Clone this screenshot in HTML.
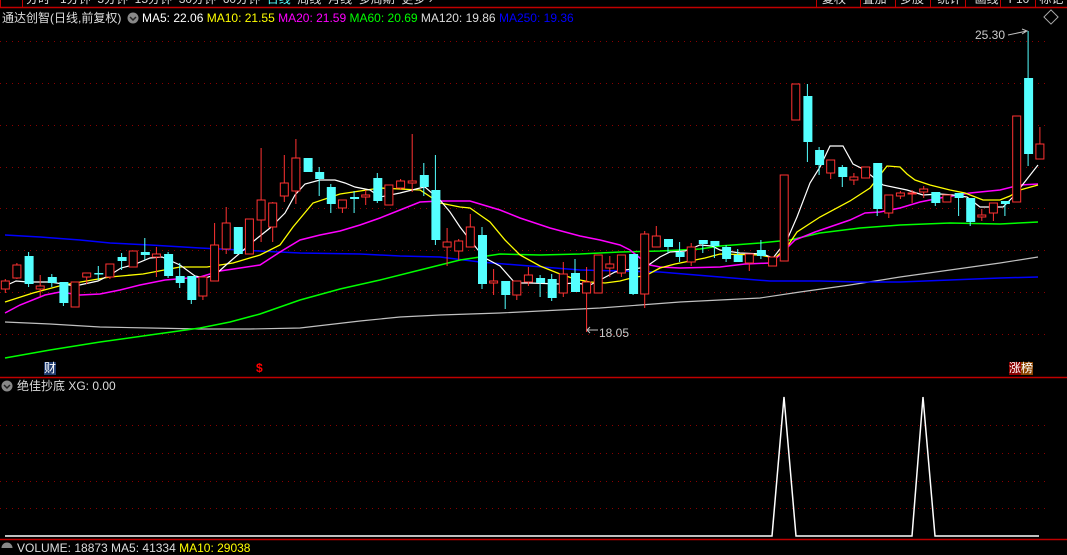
<!DOCTYPE html>
<html><head><meta charset="utf-8"><style>
html,body{margin:0;padding:0;background:#000;width:1067px;height:548px;overflow:hidden;font-family:"Liberation Sans","Noto Sans CJK SC",sans-serif}
.t{position:absolute;white-space:nowrap;font-size:12px;line-height:14px}
</style></head><body>
<svg width="1067" height="548" style="position:absolute;left:0;top:0" xmlns="http://www.w3.org/2000/svg">
<g stroke="#8b0000" stroke-width="1" stroke-dasharray="1 5">
<path d="M0 41.5H1045M0 83.5H1045M0 125.5H1045M0 167.5H1045M0 208.5H1045M0 250.5H1045M0 292.5H1045M0 334.5H1045M0 425.5H1045M0 453.5H1045M0 481.5H1045M0 508.5H1045"/>
</g>
<path d="M0 7.5H1067M0 377.5H1067M0 539.5H1067" stroke="#c00000" stroke-width="1.5"/>
<path d="M816.5 0V7M860.5 0V7M895.5 0V7M930.5 0V7M965.5 0V7M1000.5 0V7M1035.5 0V7M0.5 0V7M22.5 0V7" stroke="#c00000"/>
<g fill="none" stroke-width="1.2">
<polyline stroke="#c0c0c0" points="5,322 50,324 100,327 150,328 200,329 250,329 300,328 360,321 400,317 440,315 500,313 560,310 600,308 640,305 680,302 720,300 760,298 800,292 850,285 900,277 950,270 1000,263 1038,257"/>
<polyline stroke="#0000ff" stroke-width="1.5" points="5,235 40,237 80,240 110,243 150,245 200,248 240,250 300,253 360,254 400,256 440,257 480,262 530,266 580,270 620,271 660,272 720,277 770,281 820,281 860,282 900,282 950,280 1000,278 1038,277"/>
<polyline stroke="#00ff00" stroke-width="1.5" points="5,358 50,350 100,342 150,335 200,328 230,322 260,314 300,300 340,289 380,280 420,270 460,260 500,254 540,255 580,254 620,252 660,251 700,249 720,246 760,243 790,240 820,233 860,228 900,225 950,223 1000,224 1038,222"/>
<polyline stroke="#ff00ff" stroke-width="1.5" points="5,313 20,305 45,295 60,292 80,295 100,294 120,290 140,285 165,280 200,277 220,271 240,268 260,265 280,252 300,240 320,235 340,231 360,225 380,218 400,210 420,202 440,201 470,201 480,204 500,210 520,218 550,228 580,236 600,240 620,245 630,250 640,258 650,265 660,267 680,268 720,267 745,264 770,263 780,255 795,240 815,232 850,220 865,213 880,212 900,208 920,202 940,198 970,193 1000,190 1020,185 1038,184"/>
<polyline stroke="#ffff00" stroke-width="1.3" points="5,302 33,293 63,285 110,277 143,274 180,267 207,267 233,263 260,255 280,245 293,227 313,203 340,194 360,191 380,188 400,189 420,190 440,203 460,207 470,208 480,215 490,222 505,240 520,255 540,266 560,274 575,279 590,282 605,283 620,281 635,277 645,276 660,268 675,264 690,261 705,258 720,254 760,255 775,258 787,247 797,232 820,217 850,201 870,188 887,166 900,167 907,174 915,180 930,185 950,190 965,193 983,200 1000,200 1010,196 1020,190 1038,185"/>
<polyline stroke="#ffffff" stroke-width="1.2" points="5,286 16,281 28,282 50,282 63,284 75,286 98,281 110,275 121,268 133,265 150,258 162,257 180,265 195,276 205,278 215,275 226,265 240,253 255,240 270,228 285,213 295,195 305,184 320,180 335,180 345,183 355,187 370,190 380,197 400,193 420,188 425,187 440,200 450,212 460,227 470,240 478,250 485,258 500,266 515,283 530,283 560,284 575,283 590,285 600,280 615,272 625,270 640,268 650,264 660,257 670,252 685,251 700,245 712,246 720,250 740,253 763,254 773,258 787,240 797,217 810,183 820,167 830,146 843,146 853,164 863,169 883,185 907,190 923,195 940,194 953,195 967,197 980,207 1003,207 1013,197 1038,165"/>
</g>
<g stroke="#ff3232" stroke-width="1">
<path d="M5.3 279V293M16.9 263V279M40.2 275V296M86.7 273V284M109.9 264V279M156.4 247V277M202.9 277V300M214.6 223V281M226.2 207V254M261.1 148V242M272.7 202V242M284.3 155V202M295.9 139V204M342.4 200V213M365.7 190V205M400.6 179V190M412.2 134V192M447.1 228V266M458.7 239V260M470.3 214V247M493.6 269V295M516.8 281V300M528.4 267V286M563.3 262V297M586.6 267V332M609.8 256V277M621.4 255V277M644.7 231V308M656.3 226V247M691.2 243V266M749.3 254V271M830.7 160V179M853.9 173V185M888.8 195V218M900.4 191V199M912.1 190V203M923.7 186V198M981.8 209V221M993.4 203V221M1039.9 127V159"/>
</g>
<g stroke="#ff3232" stroke-width="1" fill="#000">
<rect x="1.3" y="281" width="8" height="8"/><rect x="12.9" y="265" width="8" height="13"/><rect x="36.2" y="286" width="8" height="3"/><rect x="71.1" y="282" width="8" height="25"/><rect x="82.7" y="273" width="8" height="4"/><rect x="105.9" y="264" width="8" height="13"/><rect x="129.2" y="251" width="8" height="16"/><rect x="152.4" y="254" width="8" height="3"/><rect x="198.9" y="277" width="8" height="19"/><rect x="210.6" y="245" width="8" height="36"/><rect x="222.2" y="223" width="8" height="26"/><rect x="245.4" y="219" width="8" height="35"/><rect x="257.1" y="200" width="8" height="20"/><rect x="268.7" y="203" width="8" height="24"/><rect x="280.3" y="183" width="8" height="13"/><rect x="291.9" y="158" width="8" height="33"/><rect x="338.4" y="200" width="8" height="8"/><rect x="361.7" y="195" width="8" height="2"/><rect x="384.9" y="185" width="8" height="20"/><rect x="396.6" y="181" width="8" height="7"/><rect x="408.2" y="181" width="8" height="2"/><rect x="443.1" y="242" width="8" height="5"/><rect x="454.7" y="241" width="8" height="10"/><rect x="466.3" y="227" width="8" height="20"/><rect x="489.6" y="281" width="8" height="2"/><rect x="512.8" y="281" width="8" height="14"/><rect x="524.4" y="275" width="8" height="7"/><rect x="559.3" y="274" width="8" height="19"/><rect x="582.6" y="282" width="8" height="11"/><rect x="594.2" y="255" width="8" height="38"/><rect x="605.8" y="264" width="8" height="4"/><rect x="617.4" y="255" width="8" height="18"/><rect x="640.7" y="234" width="8" height="60"/><rect x="652.3" y="236" width="8" height="11"/><rect x="687.2" y="247" width="8" height="15"/><rect x="745.3" y="254" width="8" height="9"/><rect x="768.6" y="257" width="8" height="9"/><rect x="780.2" y="175" width="8" height="86"/><rect x="791.8" y="84" width="8" height="36"/><rect x="826.7" y="160" width="8" height="13"/><rect x="849.9" y="177" width="8" height="3"/><rect x="861.6" y="167" width="8" height="11"/><rect x="884.8" y="195" width="8" height="18"/><rect x="896.4" y="193" width="8" height="3"/><rect x="908.1" y="193" width="8" height="1"/><rect x="919.7" y="189" width="8" height="3"/><rect x="942.9" y="195" width="8" height="7"/><rect x="977.8" y="215" width="8" height="2"/><rect x="989.4" y="203" width="8" height="10"/><rect x="1012.7" y="116" width="8" height="86"/><rect x="1035.9" y="144" width="8" height="15"/>
</g>
<g stroke="#54ffff" stroke-width="1">
<path d="M28.6 252V287M51.8 274V287M63.4 282V306M98.3 266V280M121.6 253V270M144.8 238V260M168.1 252V278M179.7 263V288M191.3 276V304M237.8 227V254M319.2 167V196M330.8 184V213M354.1 191V213M377.3 173V203M423.8 163V196M435.4 155V245M482 227V289M505.2 281V309M540.1 275V297M551.7 274V301M575 259V292M633.1 254V295M668 239V253M679.6 242V262M702.8 240V253M714.4 241V258M726.1 245V262M737.7 249V262M760.9 240V259M807.4 84V162M819.1 147V175M842.3 165V187M877.2 163V216M935.3 192V206M958.6 193V216M970.2 198V226M1004.9 201V216M1028.1 31V166"/>
</g>
<g fill="#54ffff">
<rect x="24.6" y="256" width="9" height="28"/><rect x="47.8" y="277" width="9" height="6"/><rect x="59.4" y="282" width="9" height="21"/><rect x="94.3" y="273" width="9" height="1.5"/><rect x="117.6" y="257" width="9" height="4"/><rect x="140.8" y="252" width="9" height="3"/><rect x="164.1" y="254" width="9" height="22"/><rect x="175.7" y="276" width="9" height="7"/><rect x="187.3" y="276" width="9" height="24"/><rect x="233.8" y="227" width="9" height="27"/><rect x="303.6" y="158" width="9" height="14"/><rect x="315.2" y="172" width="9" height="7"/><rect x="326.8" y="187" width="9" height="17"/><rect x="350.1" y="197" width="9" height="2"/><rect x="373.3" y="178" width="9" height="23"/><rect x="419.8" y="175" width="9" height="12"/><rect x="431.4" y="190" width="9" height="50"/><rect x="478" y="235" width="9" height="49"/><rect x="501.2" y="281" width="9" height="14"/><rect x="536.1" y="278" width="9" height="5"/><rect x="547.7" y="279" width="9" height="19"/><rect x="571" y="273" width="9" height="19"/><rect x="629.1" y="254" width="9" height="40"/><rect x="664" y="239" width="9" height="8"/><rect x="675.6" y="252" width="9" height="5"/><rect x="698.8" y="240" width="9" height="4"/><rect x="710.4" y="241" width="9" height="5"/><rect x="722.1" y="247" width="9" height="12"/><rect x="733.7" y="255" width="9" height="7"/><rect x="756.9" y="250" width="9" height="6"/><rect x="803.4" y="96" width="9" height="46"/><rect x="815.1" y="150" width="9" height="15"/><rect x="838.3" y="167" width="9" height="10"/><rect x="873.2" y="163" width="9" height="46"/><rect x="931.3" y="192" width="9" height="11"/><rect x="954.6" y="193" width="9" height="5"/><rect x="966.2" y="198" width="9" height="24"/><rect x="1000.9" y="201" width="9" height="3"/><rect x="1024.1" y="78" width="9" height="76"/>
</g>
<path d="M1008 35 L1027 31 M1022 29 L1027 31 L1022 34" stroke="#c0c0c0" fill="none"/>
<path d="M587 330H598M590 327L587 330L590 333" stroke="#c0c0c0" fill="none"/>
<path d="M5 536H772L784 397L796 536H912L923 397L935 536H1039" stroke="#fff" stroke-width="1.5" fill="none"/>
<rect x="1046" y="12" width="10" height="10" transform="rotate(45 1051 17)" fill="none" stroke="#aaa"/>
<circle cx="133" cy="18" r="5.5" fill="#888"/><path d="M130 17l3 3 3-3" stroke="#222" stroke-width="1.5" fill="none"/>
<circle cx="7" cy="386" r="5.5" fill="#888"/><path d="M4 385l3 3 3-3" stroke="#222" stroke-width="1.5" fill="none"/>
<circle cx="7" cy="548" r="5.5" fill="#888"/>
<rect x="44" y="362" width="12" height="13" fill="#1e3a6e"/>
<rect x="1009" y="362" width="12" height="13" fill="#8b0000"/>
<rect x="1021" y="362" width="12" height="13" fill="#8b4500"/>
</svg>
<div class="t" style="left:26px;top:-8px;color:#ddd">分时&nbsp;&nbsp; 1分钟&nbsp; 5分钟&nbsp; 15分钟&nbsp; 30分钟&nbsp; 60分钟&nbsp; <span style="color:#54ffff">日线</span>&nbsp; 周线&nbsp; 月线&nbsp; 多周期&nbsp; 更多 ›</div>
<div class="t" style="left:822px;top:-8px;color:#ddd;word-spacing:0">复权&nbsp;&nbsp;&nbsp;&nbsp; 叠加&nbsp;&nbsp;&nbsp; 多股&nbsp;&nbsp;&nbsp; 统计&nbsp;&nbsp;&nbsp; 画线&nbsp;&nbsp; F10&nbsp;&nbsp; 标记</div>
<div class="t" style="left:2px;top:11px;color:#ddd">通达创智(日线,前复权)</div>
<div class="t" style="left:142px;top:11px;color:#fff">MA5: 22.06 <span style="color:#ff0">MA10: 21.55</span> <span style="color:#f0f">MA20: 21.59</span> <span style="color:#0f0">MA60: 20.69</span> <span style="color:#ddd">MA120: 19.86</span> <span style="color:#00f">MA250: 19.36</span></div>
<div class="t" style="left:975px;top:28px;color:#ccc">25.30</div>
<div class="t" style="left:599px;top:326px;color:#ccc">18.05</div>
<div class="t" style="left:44px;top:361px;color:#fff">财</div>
<div class="t" style="left:256px;top:361px;color:#f00;font-weight:bold">$</div>
<div class="t" style="left:1009px;top:361px;color:#fff">涨榜</div>
<div class="t" style="left:17px;top:379px;color:#ddd">绝佳抄底 XG: 0.00</div>
<div class="t" style="left:17px;top:541px;color:#ddd">VOLUME: 18873 MA5: 41334 <span style="color:#ff0">MA10: 29038</span></div>
</body></html>
